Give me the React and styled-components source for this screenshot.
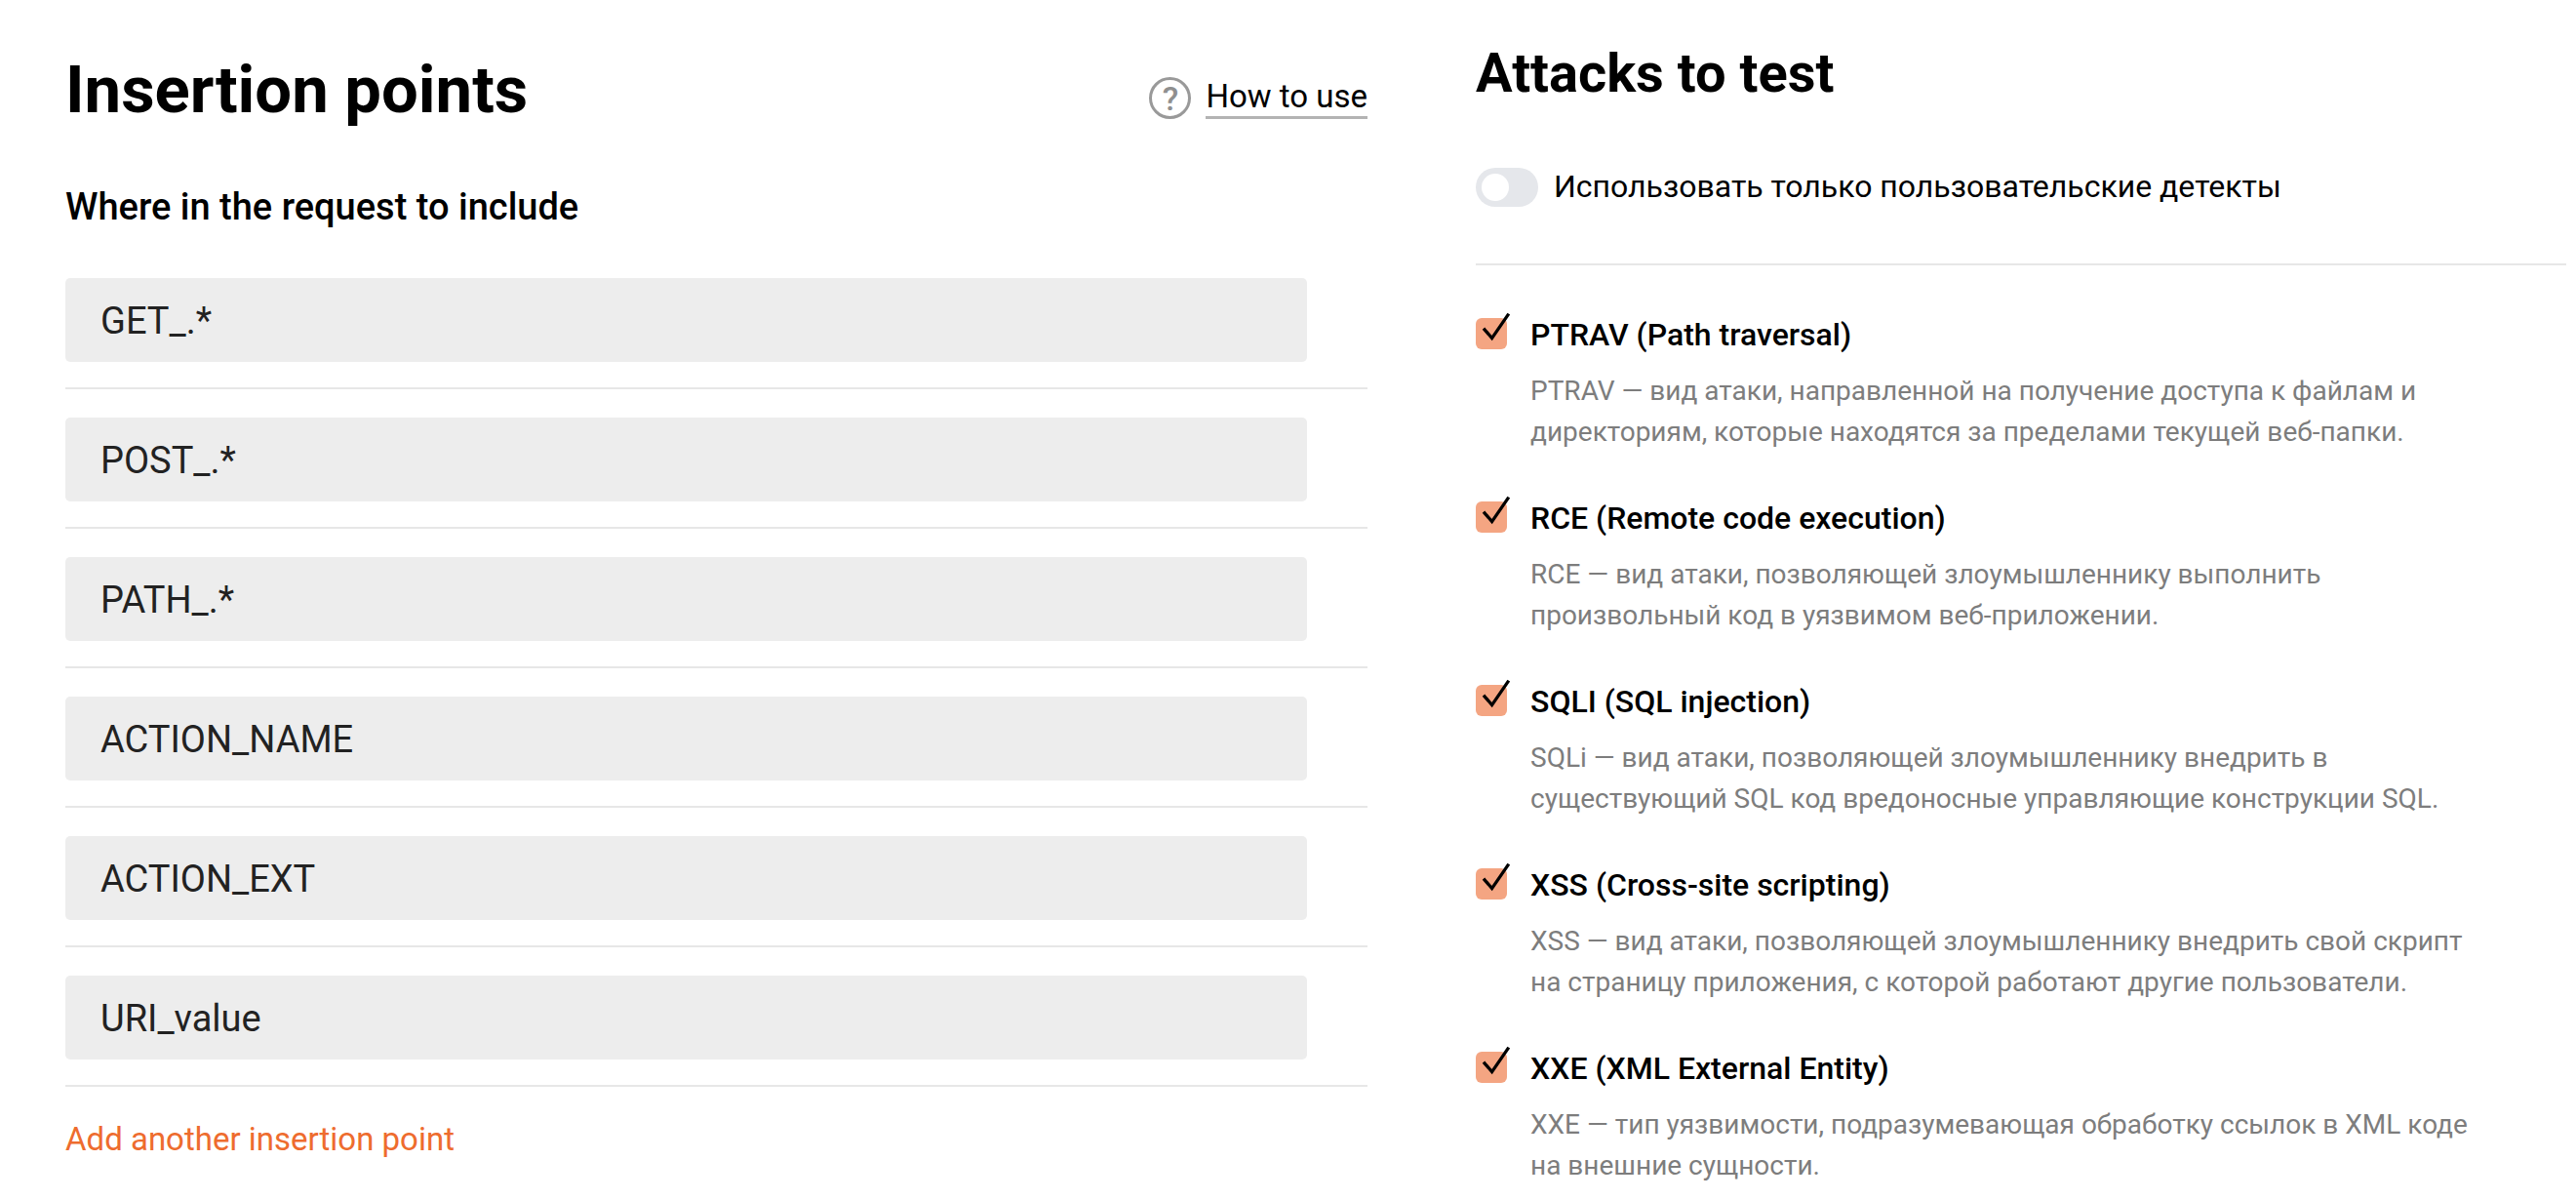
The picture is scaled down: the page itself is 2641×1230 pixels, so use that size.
import React, { useState } from "react";
import styled, { createGlobalStyle } from "styled-components";

const GlobalStyle = createGlobalStyle`
  *, *::before, *::after { box-sizing: border-box; }
  body {
    margin: 0;
    background: #fff;
    color: #000;
    font-family: Roboto, "Liberation Sans", sans-serif;
  }
  h1, h2, h3, p, ul { margin: 0; padding: 0; }
  ul { list-style: none; }
`;

const Page = styled.main`
  display: grid;
  grid-template-columns: minmax(0, 1335fr) minmax(0, 1118fr);
  column-gap: 111px;
  align-items: start;
  padding: 0 10px 0 67px;
`;

const InsertionPanel = styled.section`
  padding-top: 52px;
`;

const Header = styled.header`
  display: flex;
  justify-content: space-between;
  align-items: flex-end;
`;

const Title = styled.h1`
  font-size: 67px;
  line-height: 80px;
  font-weight: 700;
`;

const Help = styled.div`
  display: flex;
  align-items: center;
  gap: 15px;
  padding-bottom: 10px;
`;

const HelpMark = styled.span`
  display: flex;
  align-items: center;
  justify-content: center;
  width: 43px;
  height: 43px;
  border: 3px solid #999;
  border-radius: 50%;
  color: #8f8f8f;
  font-size: 34px;
  line-height: 36px;
  font-weight: 500;
`;

const HelpLink = styled.a`
  border-bottom: 3px solid #b3b3b3;
  color: #000;
  font-size: 33px;
  line-height: 40px;
  text-decoration: none;
`;

const Subtitle = styled.h2`
  margin-top: 58px;
  font-size: 38px;
  line-height: 44px;
  font-weight: 500;
`;

const PointList = styled.ul`
  display: grid;
  row-gap: 29px;
  margin-top: 51px;
`;

const PointRow = styled.li`
  padding: 0 62px 26px 0;
  border-bottom: 2px solid #e7e7e7;
`;

const PointInput = styled.input`
  display: block;
  width: 100%;
  height: 86px;
  padding: 2px 36px 0;
  border: 0;
  border-radius: 5px;
  background: #ededed;
  color: #222;
  font: 400 38px/44px Roboto, "Liberation Sans", sans-serif;
`;

const AddButton = styled.button`
  margin-top: 34px;
  padding: 0;
  border: 0;
  background: none;
  color: #ee6c2e;
  font: 400 33px/40px Roboto, "Liberation Sans", sans-serif;
  cursor: pointer;
`;

const AttackPanel = styled.section`
  padding-top: 43px;
`;

const AttackTitle = styled.h2`
  font-size: 56px;
  line-height: 64px;
  font-weight: 700;
`;

const SwitchRow = styled.label`
  display: flex;
  align-items: flex-start;
  gap: 16px;
  padding: 65px 0 58px;
  border-bottom: 2px solid #e7e7e7;
  font-size: 32px;
  line-height: 38px;
`;

const Switch = styled.input`
  appearance: none;
  flex: none;
  display: flex;
  width: 64px;
  height: 40px;
  margin: 0;
  padding: 6px;
  border-radius: 20px;
  background: #e5e7eb;

  &::before {
    content: "";
    width: 28px;
    height: 28px;
    border-radius: 50%;
    background: #fff;
  }

  &:checked {
    justify-content: flex-end;
    background: #f4a582;
  }
`;

const AttackList = styled.ul`
  display: grid;
  row-gap: 47px;
  margin-top: 51px;
`;

const AttackItem = styled.li`
  display: grid;
  grid-template-columns: 32px minmax(0, 970px);
  column-gap: 24px;
`;

const CheckWrap = styled.span`
  position: relative;
  height: 32px;
  margin-top: 3px;
`;

const Checkbox = styled.input`
  appearance: none;
  display: block;
  width: 32px;
  height: 32px;
  margin: 0;
  border-radius: 6px;
  background: #e5e7eb;

  &:checked { background: #f4a582; }
  & + svg { display: none; }
  &:checked + svg { display: block; }
`;

const Tick = styled.svg`
  position: absolute;
  left: 0;
  bottom: 0;
  width: 38px;
  height: 38px;
  pointer-events: none;
`;

const AttackLabel = styled.label`
  display: block;
  font-size: 32px;
  line-height: 40px;
  font-weight: 500;
`;

const AttackText = styled.p`
  margin-top: 17px;
  color: #7d7d7d;
  font-size: 28px;
  line-height: 42px;
`;

const points = ["GET_.*", "POST_.*", "PATH_.*", "ACTION_NAME", "ACTION_EXT", "URI_value"];

const attacks = [
  {
    id: "ptrav",
    name: "PTRAV (Path traversal)",
    text: "PTRAV — вид атаки, направленной на получение доступа к файлам и директориям, которые находятся за пределами текущей веб-папки.",
  },
  {
    id: "rce",
    name: "RCE (Remote code execution)",
    text: "RCE — вид атаки, позволяющей злоумышленнику выполнить произвольный код в уязвимом веб-приложении.",
  },
  {
    id: "sqli",
    name: "SQLI (SQL injection)",
    text: "SQLi — вид атаки, позволяющей злоумышленнику внедрить в существующий SQL код вредоносные управляющие конструкции SQL.",
  },
  {
    id: "xss",
    name: "XSS (Cross-site scripting)",
    text: "XSS — вид атаки, позволяющей злоумышленнику внедрить свой скрипт на страницу приложения, с которой работают другие пользователи.",
  },
  {
    id: "xxe",
    name: "XXE (XML External Entity)",
    text: "XXE — тип уязвимости, подразумевающая обработку ссылок в XML коде на внешние сущности.",
  },
];

function Attack({ id, name, text }) {
  return (
    <AttackItem>
      <CheckWrap>
        <Checkbox type="checkbox" id={id} defaultChecked />
        <Tick viewBox="0 0 38 38" fill="none" stroke="#000" strokeWidth="3.3" aria-hidden="true">
          <path d="M8 16.6 L16.6 26.6 L33.8 1.6" />
        </Tick>
      </CheckWrap>
      <div>
        <AttackLabel htmlFor={id}>{name}</AttackLabel>
        <AttackText>{text}</AttackText>
      </div>
    </AttackItem>
  );
}

export default function App() {
  const [values, setValues] = useState(points);

  const update = (index, value) =>
    setValues(values.map((item, i) => (i === index ? value : item)));

  return (
    <>
      <GlobalStyle />
      <Page>
        <InsertionPanel>
          <Header>
            <Title>Insertion points</Title>
            <Help>
              <HelpMark aria-hidden="true">?</HelpMark>
              <HelpLink href="#help">How to use</HelpLink>
            </Help>
          </Header>
          <Subtitle id="points-title">Where in the request to include</Subtitle>
          <PointList>
            {values.map((value, index) => (
              <PointRow key={index}>
                <PointInput
                  type="text"
                  aria-labelledby="points-title"
                  value={value}
                  onChange={(event) => update(index, event.target.value)}
                />
              </PointRow>
            ))}
          </PointList>
          <AddButton type="button" onClick={() => setValues([...values, ""])}>
            Add another insertion point
          </AddButton>
        </InsertionPanel>

        <AttackPanel>
          <AttackTitle>Attacks to test</AttackTitle>
          <SwitchRow>
            <Switch type="checkbox" role="switch" />
            Использовать только пользовательские детекты
          </SwitchRow>
          <AttackList>
            {attacks.map((attack) => (
              <Attack key={attack.id} {...attack} />
            ))}
          </AttackList>
        </AttackPanel>
      </Page>
    </>
  );
}
